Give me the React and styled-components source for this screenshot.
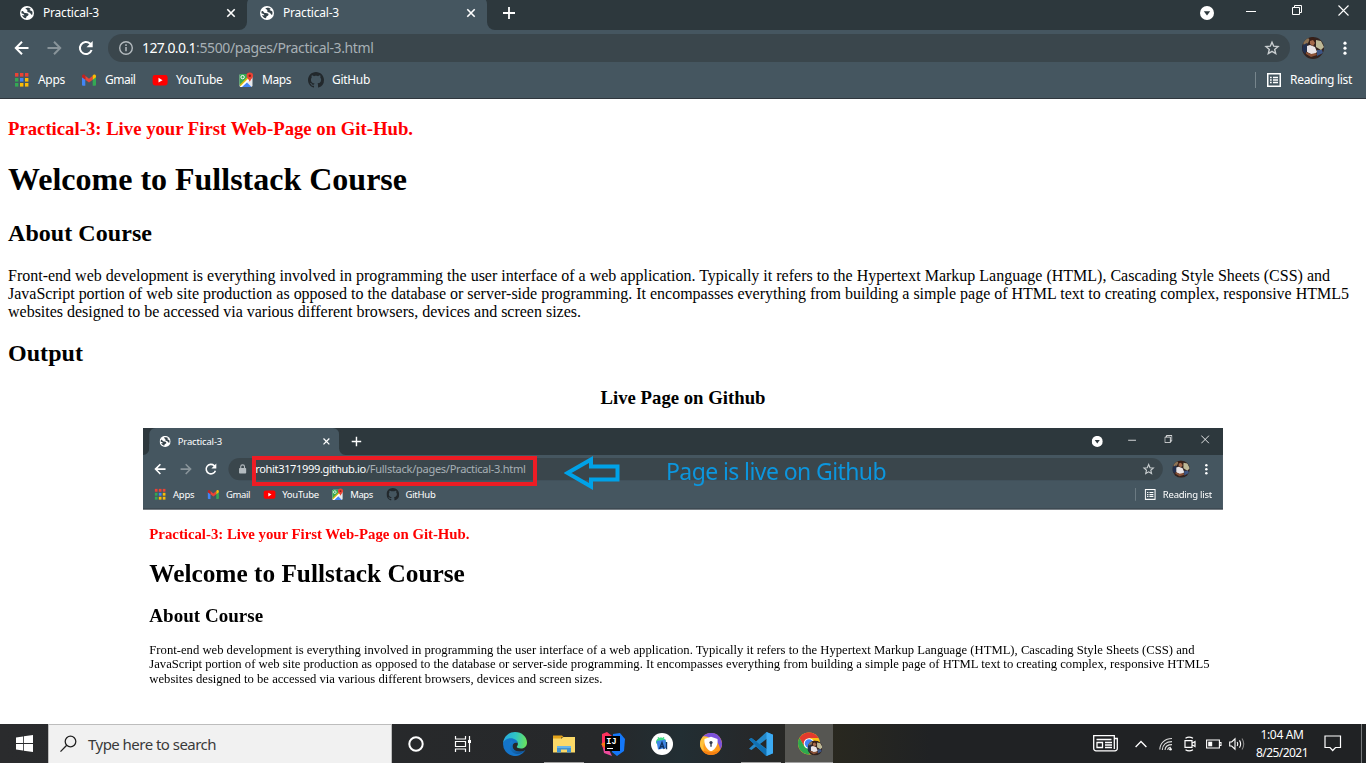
import React, { useLayoutEffect, useRef, useState } from "react";
import styled, { createGlobalStyle } from "styled-components";

const ui = '"Noto Sans", "Open Sans", sans-serif';
const serif = '"Liberation Serif", "Times New Roman", serif';
const toolbar = "#455660";
const strip = "#2d383d";

const Global = createGlobalStyle`
  * { box-sizing: border-box; }
  body { margin: 0; background: #fff; overflow: hidden; }
  svg { display: block; flex: none; }
`;

const FitText = styled.span`
  display: inline-block;
  white-space: pre;
`;

// Spreads its letters so that the text takes exactly the given width.
function Fit({ width, children }) {
  const ref = useRef(null);
  const [spacing, setSpacing] = useState(0);
  useLayoutEffect(() => {
    const el = ref.current;
    const natural = parseFloat(getComputedStyle(el).width);
    setSpacing((width - natural) / el.textContent.length);
  }, [width]);
  return (
    <FitText ref={ref} style={{ letterSpacing: spacing }}>
      {children}
    </FitText>
  );
}

/* ---------- browser window ---------- */

const Screen = styled.div`
  width: 1366px;
  height: 763px;
  display: flex;
  flex-direction: column;
  overflow: hidden;
  background: #fff;
`;
const Viewport = styled.div`
  flex: 1;
  min-height: 0;
  overflow: hidden;
`;
const WindowTop = styled.div`
  margin-top: -4px;
`;
const Chrome = styled.header`
  width: 1366px;
  height: 103px;
  background: ${toolbar};
  border-bottom: 1px solid #2f363d;
  font-family: ${ui};
  color: #fff;
`;
const TabStrip = styled.div`
  display: flex;
  height: 34px;
  background: linear-gradient(${strip} 20px, ${toolbar} 20px);
`;
const StripStart = styled.div`
  width: ${(p) => p.$w}px;
  background: ${strip};
  border-bottom-right-radius: 8px;
  display: flex;
  justify-content: flex-end;
`;
const Tab = styled.div`
  width: 240px;
  height: 34px;
  padding: 0 9px 0 13px;
  display: flex;
  align-items: center;
  background: ${(p) => (p.$active ? toolbar : "transparent")};
  border-radius: 8px 8px 0 0;
  font-size: 12px;
`;
const TabTitle = styled.span`
  flex: 1;
  margin-left: 9px;
  line-height: 18px;
`;
const StripEnd = styled.div`
  flex: 1;
  background: ${strip};
  border-bottom-left-radius: 8px;
  display: flex;
  align-items: center;
  padding: 0 2px 0 15px;
`;
const WindowButtons = styled.div`
  margin-left: auto;
  display: flex;
  align-items: center;
`;
const WindowButton = styled.div`
  width: ${(p) => p.$w}px;
  display: flex;
  justify-content: center;
  margin-top: ${(p) => p.$up || 0}px;
`;
const Toolbar = styled.div`
  height: 36px;
  display: flex;
  align-items: center;
  padding: 0 13px;
`;
const NavButton = styled.div`
  width: 32px;
  display: flex;
  align-items: center;
  padding-left: 1px;
`;
const Omnibox = styled.div`
  width: 1182px;
  height: 28px;
  border-radius: 14px;
  background: #3a464c;
  display: flex;
  align-items: center;
  padding: 0 10px;
  font-size: 14px;
  line-height: 20px;
  color: #a7b0b5;
  margin-left: -1px;
`;
const Url = styled.span`
  flex: 1;
  margin-left: 8px;
`;
const Host = styled.span`
  color: #fff;
`;
const Avatar = styled.div`
  margin-left: 12px;
`;
const Menu = styled.div`
  margin-left: 19px;
`;
const Bookmarks = styled.div`
  height: 32px;
  display: flex;
  align-items: center;
  padding-left: 13px;
  margin-top: -2px;
  font-size: 12px;
  line-height: 18px;
`;
const Bookmark = styled.div`
  width: ${(p) => p.$w}px;
  display: flex;
  align-items: center;
  gap: 8px;
`;
const ReadingList = styled.div`
  margin-left: auto;
  display: flex;
  align-items: center;
  gap: 9px;
  height: 16px;
  padding-left: 11px;
  border-left: 1px solid #77858c;
  margin-right: 14px;
`;

const Globe = () => (
  <svg width="14" height="14" viewBox="0 0 14 14">
    <circle cx="7" cy="7" r="7" fill="#fff" />
    <path d="M1.600 5.200C2.500 4.600 3.200 5 3.800 6.200 4.600 7.600 6.600 6.600 8 7.600 9.200 8.600 8.200 10 7.200 10 6.400 10.200 6.400 11.600 5.800 12.300 4.200 12 2.600 10.600 2 9L4.200 9.400C4.600 8.600 3.600 7.800 1.400 7.300ZM5.300 2.200C7 1.300 9.500 1.600 11 3L9.600 3.600C9.800 4.800 11 4.600 12.300 5.400 12.700 6.600 12.500 8 12 9 10.800 8.400 10.600 6.800 9.200 6.400 7.600 6 6.800 5.400 7.400 4.400 7.600 3.600 6.200 3.400 5.300 2.200Z" fill="#354249" />
  </svg>
);
const TabClose = () => (
  <svg width="14" height="14" viewBox="0 0 14 14" stroke="#fff" strokeWidth="1.6">
    <path d="M3.300 3.300l7.400 7.400M10.700 3.300l-7.400 7.400" />
  </svg>
);
const Plus = () => (
  <svg width="14" height="14" viewBox="0 0 14 14" stroke="#fff" strokeWidth="1.8">
    <path d="M7 1v12M1 7h12" />
  </svg>
);
const Arrow = ({ color, flip }) => (
  <svg width="16" height="16" viewBox="0 0 16 16" fill="none" stroke={color} strokeWidth="2">
    <path d={flip ? "M1.5 8h12M8 1.8 14.2 8 8 14.2" : "M14.5 8h-12M8 1.8 1.8 8 8 14.2"} />
  </svg>
);
const Reload = () => (
  <svg width="16" height="16" viewBox="0 0 16 16" fill="none">
    <path d="M13.6 10A6 6 0 1 1 12 3.6l1 1" stroke="#fff" strokeWidth="2" />
    <path d="M14.7 1v6.2H8.5z" fill="#fff" />
  </svg>
);
const Info = () => (
  <svg width="16" height="16" viewBox="0 0 16 16">
    <circle cx="8" cy="8" r="6.3" fill="none" stroke="#b4bbbf" strokeWidth="1.4" />
    <path d="M8 7v4.3M8 4.3v1.6" stroke="#b4bbbf" strokeWidth="1.5" />
  </svg>
);
const Lock = () => (
  <svg width="16" height="16" viewBox="0 0 16 16">
    <rect x="3.5" y="6.5" width="9" height="7" rx="1" fill="#b4bbbf" />
    <path d="M5.600 7V5a2.400 2.400 0 0 1 4.800 0v2" fill="none" stroke="#b4bbbf" strokeWidth="1.4" />
  </svg>
);
const Star = () => (
  <svg width="16" height="16" viewBox="0 0 16 16">
    <path d="M8 2.200l1.700 4 4.300.4-3.300 2.800 1 4.200L8 11.400l-3.700 2.200 1-4.200L2 6.600l4.300-.4z" fill="none" stroke="#c9ced0" strokeWidth="1.4" />
  </svg>
);
const Face = ({ size }) => (
  <svg width={size} height={size} viewBox="0 0 22 22">
    <clipPath id={"face" + size}>
      <circle cx="11" cy="11" r="11" />
    </clipPath>
    <g clipPath={`url(#face${size})`}>
      <path fill="#33231f" d="M0 0h22v22H0z" />
      <path fill="#8d7355" d="M1 5l4-4 3 1-2 4-4 3z" />
      <path fill="#22304f" d="M1 8l4-2 1 6-3 5-3-4z" />
      <path fill="#bdb896" d="M14 3l5 1 3 6-3 3-5-3z" />
      <path fill="#3a1f16" d="M7 1l4-1 3 3-2 5-4-1z" />
      <path fill="#a4694a" d="M8 4l3-1 2 3-2 3-3-2z" />
      <path fill="#e9e4e6" d="M5 9l3-1 5 2 2 5-4 3-6-3z" />
      <path fill="#3c5585" d="M15 13l5 0 1 3-6 3z" />
      <path fill="#8a5136" d="M4 15l5 2 5-1 1 2-6 2-5-3z" />
    </g>
  </svg>
);
const Dots = () => (
  <svg width="4" height="16" viewBox="0 0 4 16" fill="#fff">
    <circle cx="2" cy="3.2" r="1.6" />
    <circle cx="2" cy="8.2" r="1.6" />
    <circle cx="2" cy="13.2" r="1.6" />
  </svg>
);
const appColors = ["#ea4335", "#ea4335", "#ea4335", "#34a853", "#4285f4", "#fbbc05", "#34a853", "#fbbc05", "#fbbc05"];
const AppsIcon = () => (
  <svg width="17" height="16" viewBox="0 0 17 16">
    {appColors.map((c, i) => (
      <rect key={i} x={2 + (i % 3) * 5} y={1 + Math.floor(i / 3) * 5} width="3.4" height="3.6" fill={c} />
    ))}
  </svg>
);
const GmailIcon = () => (
  <svg width="16" height="16" viewBox="0 0 16 16">
    <path fill="#4285f4" d="M1 5l3.300 2.300v6.400H2a1 1 0 0 1-1-1z" />
    <path fill="#34a853" d="M11.700 7.300L15 5v7.700a1 1 0 0 1-1 1h-2.300z" />
    <path fill="#ea4335" d="M4.300 3.800L8 6.700l3.700-2.900v3.900L8 10.500 4.300 7.700z" />
    <path fill="#c5221f" d="M1 4.300c0-1.600 1.600-2.300 2.700-1.400l.6.5v4.300L1 5.300z" />
    <path fill="#fbbc04" d="M15 4.300c0-1.600-1.600-2.300-2.700-1.400l-.6.5v4.300L15 5.300z" />
  </svg>
);
const YouTubeIcon = () => (
  <svg width="16" height="16" viewBox="0 0 16 16">
    <rect x=".6" y="3" width="15" height="10.4" rx="2.4" fill="#f00" />
    <path d="M6.500 5.800v4.800l4-2.400z" fill="#fff" />
  </svg>
);
const MapsIcon = () => (
  <svg width="16" height="16" viewBox="0 0 16 16">
    <rect x="1.5" y="2" width="13" height="13" rx="1.4" fill="#e8eaed" />
    <path d="M1.500 13V3.400a1.400 1.400 0 0 1 1.400-1.400H10l1 4-8.200 8.400z" fill="#34a853" />
    <path d="M3 15l5.200-5.200 5.300 5.200z" fill="#4285f4" />
    <path d="M1.700 14.500L10.600 5.600l1.500 1.800L4 15H2.500z" fill="#fff" />
    <path d="M1.600 12.800l7.600-7.600 1.200 1.200-8.100 8.100z" fill="#fbbc04" opacity=".8" />
    <circle cx="4.6" cy="5.1" r="1.7" fill="none" stroke="#fff" strokeWidth="1" />
    <path d="M11.800.5a3.300 3.300 0 0 1 3.300 3.300c0 2-2.200 3.200-3.300 6-1.100-2.800-3.300-4-3.300-6A3.300 3.300 0 0 1 11.800.5z" fill="#ea4335" />
    <circle cx="11.800" cy="3.800" r="1.200" fill="#8b1a12" />
  </svg>
);
const GitHubIcon = () => (
  <svg width="16" height="16" viewBox="0 0 16 16" fill="#22282c">
    <path d="M8 0C3.58 0 0 3.58 0 8c0 3.54 2.29 6.53 5.47 7.59.4.07.55-.17.55-.38 0-.19-.01-.82-.01-1.49-2.01.37-2.53-.49-2.69-.94-.09-.23-.48-.94-.82-1.13-.28-.15-.68-.52-.01-.53.63-.01 1.08.58 1.23.82.72 1.21 1.87.87 2.33.66.07-.52.28-.87.51-1.07-1.78-.2-3.64-.89-3.64-3.95 0-.87.31-1.59.82-2.15-.08-.2-.36-1.02.08-2.12 0 0 .67-.21 2.2.82.64-.18 1.32-.27 2-.27s1.36.09 2 .27c1.53-1.04 2.2-.82 2.2-.82.44 1.1.16 1.92.08 2.12.51.56.82 1.27.82 2.15 0 3.07-1.87 3.75-3.65 3.95.29.25.54.73.54 1.48 0 1.07-.01 1.93-.01 2.2 0 .21.15.46.55.38A8.01 8.01 0 0 0 16 8c0-4.42-3.58-8-8-8z" />
  </svg>
);
const ListIcon = () => (
  <svg width="14" height="14" viewBox="0 0 14 14" fill="none" stroke="#fff">
    <rect x=".75" y=".75" width="12.5" height="12.5" strokeWidth="1.5" />
    <path d="M3 4.500h1.700M6 4.500h5M3 7h1.700M6 7h5M3 9.500h1.700M6 9.500h5" strokeWidth="1.3" />
  </svg>
);
const TabSearch = () => (
  <svg width="14" height="14" viewBox="0 0 14 14">
    <circle cx="7" cy="7" r="7" fill="#fff" />
    <path d="M3.800 5.200h6.400L7 9.600z" fill={strip} />
  </svg>
);
const Minimize = () => (
  <svg width="10" height="10" viewBox="0 0 10 10" stroke="#fff">
    <path d="M0 5.500h10" />
  </svg>
);
const Restore = () => (
  <svg width="10" height="10" viewBox="0 0 10 10" stroke="#fff" fill="none">
    <path d="M.5 2.500h7v7h-7zM2.500 2.500v-2h7v7h-2" />
  </svg>
);
const WindowClose = () => (
  <svg width="11" height="11" viewBox="0 0 11 11" stroke="#fff" strokeWidth="1.1">
    <path d="M.5.5l10 10M10.500.5l-10 10" />
  </svg>
);

const bookmarks = [
  { name: "Apps", slot: 68, text: 27, Icon: AppsIcon },
  { name: "Gmail", slot: 71, text: 30.5, Icon: GmailIcon },
  { name: "YouTube", slot: 86, text: 46.5, Icon: YouTubeIcon },
  { name: "Maps", slot: 70, text: 29, Icon: MapsIcon },
  { name: "GitHub", slot: 70, text: 38, Icon: GitHubIcon },
];

function BrowserTab({ active }) {
  return (
    <Tab $active={active}>
      <Globe />
      <TabTitle><Fit width={56}>Practical-3</Fit></TabTitle>
      <TabClose />
    </Tab>
  );
}

function BrowserChrome({ backgroundTab, host, hostWidth, path, pathWidth, secure }) {
  return (
    <Chrome>
      <TabStrip>
        <StripStart $w={backgroundTab ? 247 : 8}>{backgroundTab && <BrowserTab />}</StripStart>
        <BrowserTab active />
        <StripEnd>
          <Plus />
          <WindowButtons>
            <WindowButton $w={46}><TabSearch /></WindowButton>
            <WindowButton $w={42} $up={-5}><Minimize /></WindowButton>
            <WindowButton $w={50} $up={-6}><Restore /></WindowButton>
            <WindowButton $w={42} $up={-6}><WindowClose /></WindowButton>
          </WindowButtons>
        </StripEnd>
      </TabStrip>
      <Toolbar>
        <NavButton><Arrow color="#fff" /></NavButton>
        <NavButton><Arrow color="#89949a" flip /></NavButton>
        <NavButton><Reload /></NavButton>
        <Omnibox>
          {secure ? <Lock /> : <Info />}
          <Url>
            <Host><Fit width={hostWidth}>{host}</Fit></Host>
            <Fit width={pathWidth}>{path}</Fit>
          </Url>
          <Star />
        </Omnibox>
        <Avatar><Face size={22} /></Avatar>
        <Menu><Dots /></Menu>
      </Toolbar>
      <Bookmarks>
        {bookmarks.map(({ name, slot, text, Icon }) => (
          <Bookmark key={name} $w={slot}>
            <Icon />
            <Fit width={text}>{name}</Fit>
          </Bookmark>
        ))}
        <ReadingList>
          <ListIcon />
          <Fit width={62}>Reading list</Fit>
        </ReadingList>
      </Bookmarks>
    </Chrome>
  );
}

/* ---------- web page ---------- */

const Page = styled.main`
  width: 1366px;
  padding: ${(p) => p.$top || 0}px 8px 0;
  display: flow-root;
  font-family: ${serif};
  font-size: 16px;
  color: #000;
`;
const TopicTitle = styled.h3`
  margin: 19px 0 0;
  font-size: 18.72px;
  line-height: 22px;
  color: #f00;
`;
const Title = styled.h1`
  margin: 21px 0 0;
  font-size: 32px;
  line-height: 37px;
`;
const SectionTitle = styled.h2`
  margin: ${(p) => p.$top}px 0 0;
  font-size: 24px;
  line-height: 28px;
`;
const Text = styled.p`
  margin: 20px 0 0;
  line-height: 18px;
`;
const Line = styled.span`
  display: block;
`;
const FigureTitle = styled.h3`
  margin: 20px 0 19px;
  text-align: center;
  font-size: 18.72px;
  line-height: 22px;
`;
const Shot = styled.div`
  position: relative;
  width: 1080px;
  height: 340px;
  margin: 0 auto;
  overflow: hidden;
`;
const Shrunk = styled.div`
  width: 1366px;
  transform: scale(0.7906);
  transform-origin: 0 0;
`;
const RedFrame = styled.div`
  position: absolute;
  left: 109px;
  top: 28px;
  width: 285px;
  height: 30px;
  border: 4px solid #ed1c24;
`;
const PointerArrow = styled.div`
  position: absolute;
  left: 421px;
  top: 28px;
`;
const Note = styled.div`
  position: absolute;
  left: 523px;
  top: 28px;
  font-family: ${ui};
  font-size: 23px;
  line-height: 30px;
  color: #0c96de;
`;

function Article() {
  return (
    <>
      <TopicTitle><Fit width={405}>Practical-3: Live your First Web-Page on Git-Hub.</Fit></TopicTitle>
      <Title><Fit width={399}>Welcome to Fullstack Course</Fit></Title>
      <SectionTitle $top={21}><Fit width={144}>About Course</Fit></SectionTitle>
      <Text>
        <Line><Fit width={1322}>Front-end web development is everything involved in programming the user interface of a web application. Typically it refers to the Hypertext Markup Language (HTML), Cascading Style Sheets (CSS) and</Fit></Line>
        <Line><Fit width={1341}>JavaScript portion of web site production as opposed to the database or server-side programming. It encompasses everything from building a simple page of HTML text to creating complex, responsive HTML5</Fit></Line>
        <Line><Fit width={573}>websites designed to be accessed via various different browsers, devices and screen sizes.</Fit></Line>
      </Text>
    </>
  );
}

/* ---------- taskbar ---------- */

const Bar = styled.footer`
  flex: none;
  height: 39px;
  display: flex;
  background: linear-gradient(90deg, #2a2b2d 0, #26282a 600px, #222e33 680px, #26282a 750px, #29281f 830px, #202224 930px);
  font-family: ${ui};
  color: #fff;
`;
const StartButton = styled.div`
  width: 48px;
  display: flex;
  align-items: center;
  justify-content: center;
`;
const SearchBox = styled.div`
  width: 344px;
  background: #f1f1f1;
  border: 1px solid #bdbdbd;
  border-bottom: 0;
  display: flex;
  align-items: center;
  padding-left: 11px;
  gap: 10px;
  font-size: 15px;
  line-height: 22px;
  color: #3a3a3a;
`;
const TaskButton = styled.div`
  width: ${(p) => p.$w || 49}px;
  display: flex;
  align-items: center;
  justify-content: center;
  background: ${(p) => (p.$current ? "#565652" : "transparent")};
  background-image: ${(p) => (p.$open ? "linear-gradient(#a3a3a3, #a3a3a3)" : "none")};
  background-repeat: no-repeat;
  background-position: center bottom;
  background-size: ${(p) => (p.$current ? "100%" : "40px")} 1px;
`;
const Tray = styled.div`
  margin-left: auto;
  display: flex;
  align-items: center;
`;
const TrayItem = styled.div`
  width: ${(p) => p.$w}px;
  display: flex;
  justify-content: center;
`;
const Clock = styled.div`
  width: 66px;
  display: flex;
  flex-direction: column;
  align-items: center;
  font-size: 12px;
  line-height: 18px;
  padding-top: 1px;
`;
const DesktopEdge = styled.div`
  width: 5px;
  height: 39px;
  border-left: 1px solid #77797b;
  margin-left: 10px;
`;

const Windows = () => (
  <svg width="17" height="17" viewBox="0 0 17 17" fill="#fff">
    <path d="M0 2.400l7-1v6.700H0zM7.800 1.300L17 0v8.100H7.800zM0 8.900h7v6.700l-7-1zM7.800 8.900H17V17l-9.200-1.300z" />
  </svg>
);
const Magnifier = () => (
  <svg width="18" height="18" viewBox="0 0 18 18" fill="none" stroke="#222" strokeWidth="1.3">
    <circle cx="10.500" cy="6.500" r="5.300" />
    <path d="M6.700 10.300L.5 16.600" />
  </svg>
);
const Cortana = () => (
  <svg width="16" height="16" viewBox="0 0 16 16">
    <circle cx="8" cy="8" r="6.700" fill="none" stroke="#fff" strokeWidth="2" />
  </svg>
);
const TaskView = () => (
  <svg width="20" height="18" viewBox="0 0 20 18" fill="none" stroke="#fff" strokeWidth="1.2">
    <path d="M1.500 1v3h10V1M1.500 17v-3h10v3M1.500 6.500h10v5h-10zM15.500 1v16" />
    <path d="M14 5h3v3h-3z" fill="#fff" stroke="none" />
  </svg>
);
const Edge = () => (
  <svg width="24" height="24" viewBox="0 0 24 24">
    <defs>
      <linearGradient id="edgeTop" x1="0" y1=".4" x2="1" y2=".5">
        <stop offset="0" stopColor="#27a8df" />
        <stop offset=".5" stopColor="#2fc5c4" />
        <stop offset="1" stopColor="#6be35a" />
      </linearGradient>
      <linearGradient id="edgeLow" x1="0" y1="0" x2="1" y2="1">
        <stop offset="0" stopColor="#1583d5" />
        <stop offset="1" stopColor="#114a8b" />
      </linearGradient>
    </defs>
    <path fill="#1474c9" d="M0 12C.3 7 4 4.500 8.500 5c4.500.3 6.500 3.500 6 6.200-1.600-1.200-5-.2-5 3 0 5 6.500 7.500 12.800 4A12 12 0 0 1 0 12z" />
    <path fill="url(#edgeLow)" d="M8.600 8.500C4.500 12 6.500 20 12.500 21.800c3.500 1 7-.8 9.800-3.600-4.800 2.300-10.400 1.300-12.300-2-1.300-2.300-.5-4.200 1-5.200z" />
    <path fill="url(#edgeTop)" d="M.1 11C.8 4.500 6 0 12 0c7 0 12 5 12 10.500 0 4-3 6-6 6-2.600 0-4.600-.8-4.200-1.700.5-1 1.100-1.500 1.100-2.800 0-3.500-3.400-5.700-7.100-5.700C4 6.300 1 8.200.1 11z" />
  </svg>
);
const Explorer = () => (
  <svg width="22" height="20" viewBox="0 0 22 20">
    <path fill="#e3a21a" d="M0 1.500h9l2 2h-3v3H0z" />
    <path fill="#fbd968" d="M0 4.500h8.500L10.500 3H22v15.500H0z" />
    <path fill="#3f92d2" d="M4 18.500v-6.500h14v6.500h-4v-3H8v3z" />
    <path fill="#67b5e8" d="M4 12h14v2H4z" />
  </svg>
);
const JetBrains = ({ label }) => (
  <svg width="24" height="24" viewBox="0 0 24 24">
    <path fill="#fe315d" d="M1 2l5-2 5 4 2 12-9 4-3-6z" />
    <path fill="#f97a12" d="M0 12l4-2 3 6-2 1z" />
    <path fill="#ec4a9b" d="M2 16l6 2 3 6-8-3z" />
    <path fill="#1477f8" d="M12 2l7-1 5 6-1 12-7 5-5-4z" />
    <path fill="#000" d="M4 4h15v15H4z" />
    <path fill="#fff" d="M6 16h6v1H6z" />
    <text x="5.300" y="12.300" fontFamily="Liberation Mono, monospace" fontWeight="700" fontSize="8.500" fill="#fff">{label}</text>
  </svg>
);
const AndroidStudio = () => (
  <svg width="22" height="22" viewBox="0 0 22 22">
    <circle cx="11" cy="11" r="11" fill="#fff" />
    <path d="M5 9.500a5 4.500 0 0 1 10-1v2H5z" fill="#3ddc84" />
    <path d="M5.500 8l9-1.500.7 8.500-8.200 1.500z" fill="#3f86e8" />
    <path d="M8.500 16l2.500-6.500 2.200 6.500M9.500 13.700h3M15.500 9v7.300" stroke="#103463" strokeWidth="1.400" fill="none" />
    <path d="M8 6L7 4M12 5.500L13 4" stroke="#3ddc84" />
  </svg>
);
const SecureBrowser = () => (
  <svg width="22" height="22" viewBox="0 0 22 22">
    <circle cx="11" cy="11" r="11" fill="#ff9d1c" />
    <path d="M2 4.500A11 11 0 0 1 22 11c0 2-.8 4-2 5.500C20 10 14 3.500 2 4.500z" fill="#7d52dc" />
    <path d="M1.500 16.500A11 11 0 0 0 20.500 16.500C15 20 8 20 1.500 16.500z" fill="#f57f12" />
    <path d="M0 11A11 11 0 0 1 3 3.500c3.500-.5 5 .5 6 1.500C4 7 2.500 12 4 18 1.500 16.500 0 14 0 11z" fill="#ffc23a" />
    <path d="M11 3.700l6.500 2.200c.8 5-1.500 10-6.500 12.400C6 15.900 3.700 10.900 4.500 5.900z" fill="#fff" />
    <circle cx="11" cy="9.500" r="1.600" fill="#333a4d" />
    <path d="M10.300 10h1.400v3.800h-1.400z" fill="#333a4d" />
  </svg>
);
const VSCode = () => (
  <svg width="24" height="24" viewBox="0 0 24 24">
    <path fill="#2489ca" d="M17.500 0L24 2.800V21.200L17.500 24 7 14.500 2.500 18 0 16.800 5 12 0 7.200 2.500 6 7 9.500zM17.800 6.800L11 12l6.800 5.200z" fillRule="evenodd" />
    <path fill="#1070b3" d="M0 7.200L2.500 6 17.800 17.500V24h-.6z" />
    <path fill="#3cabf3" d="M17.500 0L24 2.800v18.400L17.500 24z" />
  </svg>
);
const ChromeLogo = () => (
  <svg width="26" height="26" viewBox="0 0 26 26">
    <circle cx="13" cy="12.500" r="11" fill="#fbc116" />
    <path d="M3.500 7A11 11 0 0 1 22.500 7H13L8.200 15.300z" fill="#e33b2e" />
    <path d="M3.500 7A11 11 0 0 0 13 23.500l4.800-8.200H8.200z" fill="#2da94f" />
    <circle cx="13" cy="12.500" r="5.300" fill="#fff" />
    <circle cx="13" cy="12.500" r="4.200" fill="#4285f4" />
    <g transform="translate(11.500 9.500)"><Face size={15} /></g>
  </svg>
);
const News = () => (
  <svg width="25" height="17" viewBox="0 0 25 17" fill="none" stroke="#fff" strokeWidth="1.300">
    <path d="M21.500 3.500h2.800v10a2.300 2.300 0 0 1-2.300 2.300H3A2.300 2.300 0 0 1 .7 13.500V.7h20.600V14M3.500 4.500h15M4 7.500h5.500v5H4zM12 7.500h7M12 10h7M12 12.500h7" />
  </svg>
);
const Chevron = () => (
  <svg width="12" height="8" viewBox="0 0 12 8" fill="none" stroke="#fff" strokeWidth="1.300">
    <path d="M.6 7L6 1.500 11.400 7" />
  </svg>
);
const Wifi = () => (
  <svg width="14" height="14" viewBox="0 0 14 14" fill="none" stroke="#ddd" strokeWidth="1.100">
    <path d="M.8 12.500C1 6 6 1.500 13 1.500M3.300 13C3.500 8 7 4.600 13 4.600M6 13C6.200 10 8.500 7.600 13 7.600" />
    <path d="M8.700 13c.2-1.500 1.500-2.700 3.300-2.700" />
    <circle cx="11.500" cy="12.300" r="1.300" fill="#fff" stroke="none" />
  </svg>
);
const MeetNow = () => (
  <svg width="12" height="16" viewBox="0 0 12 16" fill="none" stroke="#fff" strokeWidth="1.200">
    <path d="M1 4.700h7v6.600H1zM8 7.200l3-1.700v5L8 8.800M1.500 2.200Q5 0 9 2.200M1.500 13.800Q5 16 9 13.800" />
  </svg>
);
const Battery = () => (
  <svg width="16" height="10" viewBox="0 0 16 10" fill="none" stroke="#fff" strokeWidth="1.100">
    <path d="M.6 1h12.800v8H.6zM13.500 3.500h1.500v3h-1.500" />
    <path d="M2.200 2.700h4v4.600h-4z" fill="#fff" stroke="none" />
  </svg>
);
const Volume = () => (
  <svg width="17" height="14" viewBox="0 0 17 14" fill="none" stroke="#fff" strokeWidth="1.100">
    <path d="M.7 5h2L6 1.800v10.400L2.700 9h-2zM8.200 5q1.200 2 0 4M10.500 3.400q2.300 3.600 0 7.200" />
    <path d="M13 1.500q3.500 5.500 0 11" stroke="#888" />
  </svg>
);
const Notifications = () => (
  <svg width="18" height="17" viewBox="0 0 18 17" fill="none" stroke="#fff" strokeWidth="1.200">
    <path d="M1 1h15.500v11.500h-5L8.700 15.500 6 12.500H1z" />
  </svg>
);

export default function App() {
  return (
    <>
      <Global />
      <Screen>
        <Viewport>
          <WindowTop>
            <BrowserChrome backgroundTab host="127.0.0.1" hostWidth={54} path=":5500/pages/Practical-3.html" pathWidth={177.500} />
          </WindowTop>
          <Page>
            <Article />
            <SectionTitle $top={18}><Fit width={75}>Output</Fit></SectionTitle>
            <FigureTitle><Fit width={165}>Live Page on Github</Fit></FigureTitle>
            <Shot>
              <Shrunk>
                <BrowserChrome secure host="rohit3171999.github.io" hostWidth={140} path="/Fullstack/pages/Practical-3.html" pathWidth={202} />
                <Page $top={1}><Article /></Page>
              </Shrunk>
              <RedFrame />
              <PointerArrow>
                <svg width="57" height="34" viewBox="0 0 57 34" fill="none" stroke="#00a2e8" strokeWidth="4">
                  <path d="M3.500 17L27 3.500v7h26.500v13H27v7z" />
                </svg>
              </PointerArrow>
              <Note><Fit width={220}>Page is live on Github</Fit></Note>
            </Shot>
          </Page>
        </Viewport>
        <Bar>
          <StartButton><Windows /></StartButton>
          <SearchBox>
            <Magnifier />
            <Fit width={128}>Type here to search</Fit>
          </SearchBox>
          <TaskButton $w={48}><Cortana /></TaskButton>
          <TaskButton $w={48}><TaskView /></TaskButton>
          <TaskButton $w={53}><Edge /></TaskButton>
          <TaskButton $w={46} $open><Explorer /></TaskButton>
          <TaskButton $w={52}><JetBrains label="IJ" /></TaskButton>
          <TaskButton $w={46}><AndroidStudio /></TaskButton>
          <TaskButton $w={52}><SecureBrowser /></TaskButton>
          <TaskButton $w={48} $open><VSCode /></TaskButton>
          <TaskButton $w={48} $open $current><ChromeLogo /></TaskButton>
          <Tray>
            <TrayItem $w={46}><News /></TrayItem>
            <TrayItem $w={26}><Chevron /></TrayItem>
            <TrayItem $w={24}><Wifi /></TrayItem>
            <TrayItem $w={23}><MeetNow /></TrayItem>
            <TrayItem $w={25}><Battery /></TrayItem>
            <TrayItem $w={23}><Volume /></TrayItem>
            <Clock>
              <Fit width={43}>1:04 AM</Fit>
              <Fit width={52}>8/25/2021</Fit>
            </Clock>
            <TrayItem $w={36}><Notifications /></TrayItem>
            <DesktopEdge />
          </Tray>
        </Bar>
      </Screen>
    </>
  );
}
